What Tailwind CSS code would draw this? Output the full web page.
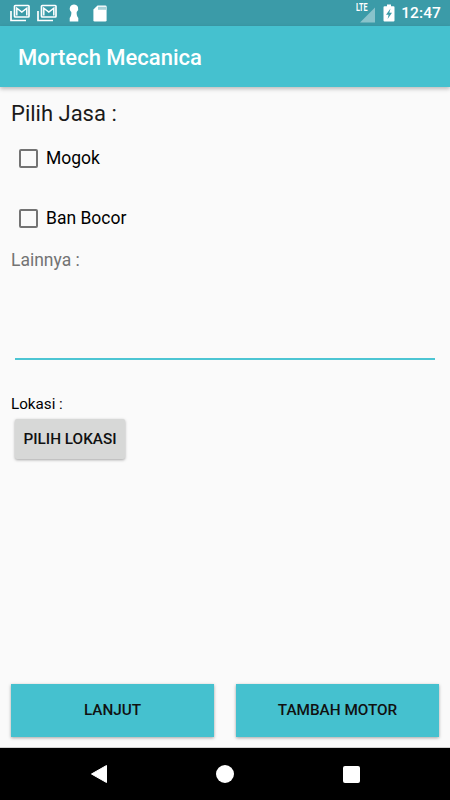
<!doctype html>
<html lang="id">
<head>
<meta charset="utf-8">
<script src="https://cdn.jsdelivr.net/npm/@tailwindcss/browser@4"></script>
<title>Mortech Mecanica</title>
</head>
<body class="bg-[#fafafa]">
<div class="w-[450px] h-[800px] flex flex-col overflow-hidden bg-[#fafafa] font-['Roboto',sans-serif] text-black">
  <div class="h-[26px] shrink-0 bg-[#3b9ba8] flex items-center justify-between pl-[10px] pr-[9px] text-white">
    <div class="flex items-center">
      <svg width="20" height="18" viewBox="0 0 20 18" fill="none" class="mr-[7px]">
        <path d="M1 7v9.500h15" stroke="#fff" stroke-width="1.700"/>
        <rect x="4.500" y="1.500" width="14.500" height="11.500" rx=".8" fill="#3b9ba8" stroke="#fff" stroke-width="1.700"/>
        <path d="M6.800 11.500V4.200l5 3.800 5-3.800v7.300" stroke="#fff" stroke-width="1.500" fill="none"/>
      </svg>
      <svg width="20" height="18" viewBox="0 0 20 18" fill="none" class="mr-[11px]">
        <path d="M1 7v9.500h15" stroke="#fff" stroke-width="1.700"/>
        <rect x="4.500" y="1.500" width="14.500" height="11.500" rx=".8" fill="#3b9ba8" stroke="#fff" stroke-width="1.700"/>
        <path d="M6.800 11.500V4.200l5 3.800 5-3.800v7.300" stroke="#fff" stroke-width="1.500" fill="none"/>
      </svg>
      <svg width="12" height="18" viewBox="0 0 12 18" class="mr-[13px]">
        <path d="M6 0.500a4.300 4.300 0 0 1 2.700 7.600c-.3 2 .3 4.500 1.600 5.900v3.500H1.700V14c1.300-1.400 1.900-3.900 1.600-5.900A4.300 4.300 0 0 1 6 .5z" fill="#fff"/>
      </svg>
      <svg width="14" height="17" viewBox="0 0 14 17">
        <path d="M4.500 0.500H12.300a1.300 1.300 0 0 1 1.300 1.300v13.500a1.300 1.300 0 0 1-1.300 1.300H1.700a1.300 1.300 0 0 1-1.300-1.300V4.600z" fill="#fff"/>
        <path d="M6 1.800v3M8 1.800v3M10 1.800v3M12 1.800v3" stroke="#3b9ba8" stroke-width=".9"/>
      </svg>
    </div>
    <div class="flex items-center">
      <div class="relative w-[20px] h-[20px] mr-[7px]">
        <svg width="16" height="16" viewBox="0 0 16 16" class="absolute right-0 bottom-0"><path d="M15 0.500V15.500H0z" fill="#fff" fill-opacity=".4"/></svg>
        <span class="absolute left-0 top-[0px] text-[10px] leading-[10px] font-bold origin-left scale-x-[0.72]">LTE</span>
      </div>
      <svg width="12" height="18" viewBox="0 0 12 18" class="mr-[6px]">
        <path d="M4 .5h4v1.700h2.500a1 1 0 0 1 1 1V16.500a1 1 0 0 1-1 1h-9a1 1 0 0 1-1-1V3.200a1 1 0 0 1 1-1H4z" fill="#fff"/>
        <path d="M7.500 4.500 3 10.800h2.600L4.600 15 9 8.700H6.300z" fill="#3b9ba8"/>
      </svg>
      <span class="text-[15.500px] leading-[26px] font-medium tracking-[0.1px]">12:47</span>
    </div>
  </div>
  <div class="h-[61px] shrink-0 bg-[#45c1cf] flex items-center pl-[18px] pt-[2px] shadow-[0_2px_4px_rgba(0,0,0,0.25)] relative">
    <span class="text-white text-[22px] font-medium leading-[28px]">Mortech Mecanica</span>
  </div>
  <div class="flex-1 min-h-0 flex flex-col pt-[13px] pl-[11px] pr-[11px]">
    <p class="text-[22px] leading-[28px] text-[#1a1a1a]">Pilih Jasa :</p>
    <div class="flex items-center h-[32px] mt-[14px] pl-[8px]">
      <span class="w-[19px] h-[19px] rounded-[2px] border-2 border-[#737373] mr-[8px]"></span>
      <span class="text-[17.500px] leading-[24px]">Mogok</span>
    </div>
    <div class="flex items-center h-[32px] mt-[28px] pl-[8px]">
      <span class="w-[19px] h-[19px] rounded-[2px] border-2 border-[#737373] mr-[8px]"></span>
      <span class="text-[17.500px] leading-[24px]">Ban Bocor</span>
    </div>
    <p class="text-[17.500px] leading-[24px] text-[#737373] mt-[14px]">Lainnya :</p>
    <div class="h-[2px] bg-[#4cc5d3] mt-[86px] ml-[4px] mr-[4px]"></div>
    <p class="text-[15.200px] leading-[20px] mt-[34px]">Lokasi :</p>
    <button class="w-[110px] h-[40px] mt-[5px] ml-[4px] rounded-[2px] bg-[#d7d8d7] shadow-[0_1px_3px_rgba(0,0,0,0.35)] text-[15.300px] font-medium text-[#111]">PILIH LOKASI</button>
    <div class="mt-auto flex justify-between mb-[10px]">
      <button class="w-[203px] h-[53px] bg-[#45c1cf] shadow-[0_1px_3px_rgba(0,0,0,0.35)] text-[15.300px] font-medium text-[#111]">LANJUT</button>
      <button class="w-[203px] h-[53px] bg-[#45c1cf] shadow-[0_1px_3px_rgba(0,0,0,0.35)] text-[15.300px] font-medium text-[#111]">TAMBAH MOTOR</button>
    </div>
  </div>
  <div class="h-[53px] shrink-0 bg-black flex items-center justify-center border-t border-[#d0d0d0]">
    <div class="w-[450px] h-[52px] flex items-center justify-center gap-[109px] pl-[1px]">
      <svg width="16" height="18" viewBox="0 0 16 18"><path d="M15.500.500V17.500L.500 9z" fill="#fff" stroke="#fff" stroke-linejoin="round"/></svg>
      <span class="w-[18px] h-[18px] rounded-full bg-white"></span>
      <span class="w-[17px] h-[17px] rounded-[2px] bg-white"></span>
    </div>
  </div>
</div>
</body>
</html>
